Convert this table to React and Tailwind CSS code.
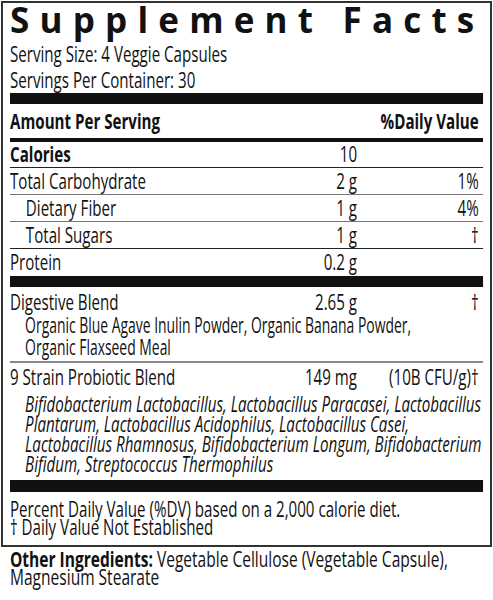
const rows = [
  { label: "Calories", amount: "10", dv: "", bold: true, h: "h-[26px] leading-[25px] border-b border-[#222]" },
  { label: "Total Carbohydrate", amount: "2 g", dv: "1%", h: "h-[27px] leading-[26px] border-b border-[#777]" },
  { label: "Dietary Fiber", amount: "1 g", dv: "4%", indent: true, h: "h-[27px] leading-[26px] border-b border-[#777]" },
  { label: "Total Sugars", amount: "1 g", dv: "†", indent: true, h: "h-[27px] leading-[26px] border-b border-[#222]" },
  { label: "Protein", amount: "0.2 g", dv: "", h: "h-[27px] leading-[27px]" },
];

function Row({ label, amount, dv, bold, indent, h }) {
  return (
    <div className={`flex ${h}`}>
      <span className={`flex-1 ${indent ? "pl-[22px]" : ""} ${bold ? "font-bold" : ""}`}>{label}</span>
      <span className="text-right">{amount}</span>
      <span className="w-[169px] mr-[6px] text-right">{dv}</span>
    </div>
  );
}

export default function App() {
  return (
    <div
      className="w-[493px] h-[600px] overflow-hidden bg-white text-[#111] text-[21px] pt-[1px]"
      style={{ fontFamily: '"Open Sans", "Liberation Sans", sans-serif' }}
    >
      {/* Label box */}
      <div className="ml-[1px] w-[491px] border-2 border-[#333] pl-[7px] pr-[6px] pb-[9px]">
        <h1 className="-mt-[2px] text-[35px] font-bold leading-[38px] tracking-[10.2px] whitespace-nowrap">
          Supplement Fact<span className="tracking-normal">s</span>
        </h1>

        {/* condensed body, like the printed label */}
        <div className="w-[657px] origin-top-left scale-x-[0.72]">
          <div className="mt-[2px] leading-[26px]">Serving Size: 4 Veggie Capsules</div>
          <div className="leading-[26px]">Servings Per Container: 30</div>

          <div className="h-[11px] bg-[#111]" />

          <div className="flex h-[34px] leading-[34px] font-bold">
            <span className="flex-1">Amount Per Serving</span>
            <span className="mr-[6px]">%Daily Value</span>
          </div>
          <div className="h-[4px] bg-[#111]" />

          {rows.map((r) => (
            <Row key={r.label} {...r} />
          ))}

          <div className="h-[11px] bg-[#111]" />

          {/* Digestive blend */}
          <div className="pt-[3px] pb-[3px] border-b-2 border-[#888]">
            <div className="flex leading-[24px]">
              <span className="flex-1">Digestive Blend</span>
              <span className="text-right">2.65 g</span>
              <span className="w-[169px] mr-[6px] text-right">†</span>
            </div>
            <p className="ml-[21px] leading-[22px] whitespace-nowrap origin-left scale-x-[0.92]">
              Organic Blue Agave Inulin Powder, Organic Banana Powder,
              <br />
              Organic Flaxseed Meal
            </p>
          </div>

          {/* Probiotic blend */}
          <div className="pt-[2px] pb-[6px]">
            <div className="flex leading-[24px]">
              <span className="flex-1">9 Strain Probiotic Blend</span>
              <span className="text-right">149 mg</span>
              <span className="w-[169px] mr-[6px] text-right">(10B CFU/g)†</span>
            </div>
            <p className="mt-[5px] pl-[21px] leading-[20px] italic whitespace-nowrap">
              Bifidobacterium Lactobacillus, Lactobacillus Paracasei, Lactobacillus
              <br />
              Plantarum, Lactobacillus Acidophilus, Lactobacillus Casei,
              <br />
              Lactobacillus Rhamnosus, Bifidobacterium Longum, Bifidobacterium
              <br />
              Bifidum, Streptococcus Thermophilus
            </p>
          </div>

          <div className="h-[12px] bg-[#111]" />

          <div className="pt-[8px] leading-[18px]">
            <div>Percent Daily Value (%DV) based on a 2,000 calorie diet.</div>
            <div>† Daily Value Not Established</div>
          </div>
        </div>
      </div>

      {/* Other ingredients */}
      <p className="ml-[10px] w-[640px] origin-top-left scale-x-[0.74] pt-[3px] leading-[18px] whitespace-nowrap">
        <span className="font-bold">Other Ingredients:</span> Vegetable Cellulose (Vegetable Capsule),
        <br />
        Magnesium Stearate
      </p>
    </div>
  );
}
